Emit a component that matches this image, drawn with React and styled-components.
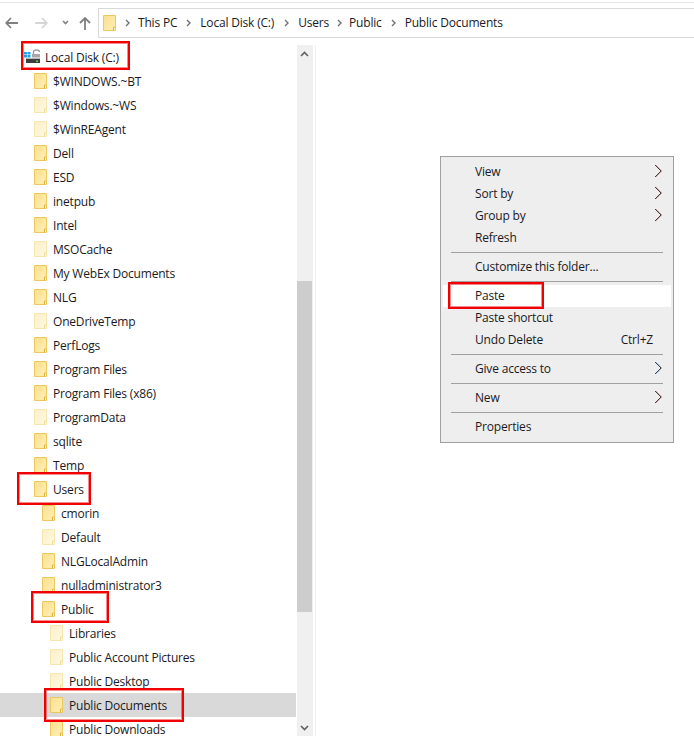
import React from "react";
import styled, { createGlobalStyle } from "styled-components";

const Global = createGlobalStyle`
  html, body { margin: 0; padding: 0; background: #fff; }
  body { font-family: "Open Sans", "Noto Sans", "Liberation Sans", sans-serif; font-size: 12px; letter-spacing: -0.19px; color: #1a1a24; }
`;

const Page = styled.div`
  position: relative;
  width: 694px;
  height: 742px;
  overflow: hidden;
  background: #fff;
`;
const TopLine = styled.div`
  height: 1px;
  margin-top: 2px;
  background: #e3e5e8;
`;
const Toolbar = styled.div`
  display: flex;
  align-items: center;
  height: 30px;
  margin-top: 5px;
`;
const NavButtons = styled.div`
  display: flex;
  align-items: center;
  width: 98px;
  flex: none;
`;
const NavBtn = styled.span`
  display: flex;
  width: ${p => p.$w}px;
  justify-content: center;
  color: ${p => p.$c};
`;
const Address = styled.div`
  flex: 1;
  height: 30px;
  box-sizing: border-box;
  border: 1px solid #d9d9d9;
  border-right: none;
  display: flex;
  align-items: center;
  padding-left: 4px;
`;
const Crumb = styled.span`
  white-space: nowrap;
  line-height: 16px;
`;
const Sep = styled.span`
  display: flex;
  width: ${p => p.$w}px;
  justify-content: center;
`;
const Main = styled.div`
  display: flex;
  height: 691px;
  margin-top: 7px;
`;
const Tree = styled.div`
  width: 296px;
  flex: none;
  overflow: hidden;
`;
const Row = styled.div`
  display: flex;
  align-items: center;
  height: 24px;
  padding-left: ${p => p.$indent}px;
  background: ${p => (p.$selected ? "#d9d9d9" : "transparent")};
  gap: ${p => p.$gap ?? 6}px;
  white-space: nowrap;
`;
const ScrollBar = styled.div`
  width: 16px;
  margin-left: 1px;
  flex: none;
  display: flex;
  flex-direction: column;
  background: #f0f0f0;
`;
const ScrollArrow = styled.div`
  height: 17px;
  flex: none;
  display: flex;
  align-items: center;
  justify-content: center;
  padding-right: 1px;
`;
const ScrollSpace = styled.div`
  height: ${p => p.$h}px;
  margin-right: 1px;
  flex: none;
  background: ${p => p.$c};
`;
const Divider = styled.div`
  width: 1px;
  margin-left: 2px;
  flex: none;
  background: #f0f0f0;
`;

const Menu = styled.div`
  position: absolute;
  left: 440px;
  top: 156px;
  width: 234px;
  height: 287px;
  box-sizing: border-box;
  border: 1px solid #a0a0a0;
  background: #eeeeee;
  padding: 4px 2px 0;
`;
const MenuItem = styled.div`
  display: flex;
  align-items: center;
  justify-content: space-between;
  height: 22px;
  box-sizing: border-box;
  padding: 0 10px 2px 32px;
  background: ${p => (p.$hover ? "#ffffff" : "transparent")};
`;
const Shortcut = styled.span`
  margin-right: 8px;
`;
const MenuSep = styled.div`
  height: 1px;
  margin: 3px 8px;
  background: #a0a0a0;
`;
const Mark = styled.div`
  position: absolute;
  left: ${p => p.$x}px;
  top: ${p => p.$y}px;
  width: ${p => p.$w}px;
  height: ${p => p.$h}px;
  box-sizing: border-box;
  border: 2px solid #f00000;
  box-shadow: inset 0 0 0 1px rgba(240, 0, 0, 0.45);
  pointer-events: none;
`;

const Gradients = () => (
  <svg width="0" height="0" style={{ position: "absolute" }}>
    <defs>
      <linearGradient id="fn" x1="0" y1="0" x2="1" y2="1">
        <stop offset="0" stopColor="#fbdf8c" />
        <stop offset="1" stopColor="#ffefb8" />
      </linearGradient>
      <linearGradient id="ff" x1="0" y1="0" x2="1" y2="1">
        <stop offset="0" stopColor="#fdf0c8" />
        <stop offset="1" stopColor="#fff8e0" />
      </linearGradient>
    </defs>
  </svg>
);

const FolderIcon = ({ faded }) => (
  <svg width="13" height="16" viewBox="0 0 13 16" style={{ flex: "none" }}>
    <path
      d="M.5.5h12v15H.5z"
      fill={faded ? "url(#ff)" : "url(#fn)"}
      stroke={faded ? "#f6e6b0" : "#ecc95f"}
    />
    <path d="M10.5 15.5v-3.5h2" fill={faded ? "#fffaf0" : "#fff5cf"} stroke={faded ? "#f0dc9a" : "#e3b53c"} />
  </svg>
);

const DiskIcon = () => (
  <svg width="17" height="16" viewBox="0 0 17 16" style={{ flex: "none" }}>
    <rect x="0" y="3" width="3" height="2.5" fill="#1aa3ea" />
    <rect x="3.5" y="3" width="3" height="2.5" fill="#1aa3ea" />
    <rect x="0" y="6" width="3" height="2.5" fill="#1aa3ea" />
    <rect x="3.5" y="6" width="3" height="2.5" fill="#1aa3ea" />
    <path d="M9.5 5V3C9.5 .4 15.5 .4 15.5 3" fill="none" stroke="#9c9c9c" strokeWidth="1.4" />
    <rect x="8" y="5" width="8" height="3.5" fill="#a8a8a8" />
    <rect x="2" y="9" width="14" height="1" fill="#b8b8b8" />
    <rect x="2" y="10" width="14" height="4" fill="#3e3e3e" />
    <rect x="12" y="11.5" width="2" height="1.5" fill="#4fd24f" />
  </svg>
);

const Chevron = () => (
  <svg width="7" height="8" viewBox="0 0 7 8">
    <path d="M2 1l3 3-3 3" fill="none" stroke="#707070" strokeWidth="1.4" />
  </svg>
);

const SubArrow = ({ color = "#9a3a3a" }) => (
  <svg width="8" height="14" viewBox="0 0 8 14" style={{ marginRight: "-1px" }}>
    <path d="M1 1l6 6-6 6" fill="none" stroke="#3d3d3d" strokeWidth="1" />
    <path d="M1.8 1l6 6-6 6" fill="none" stroke={color} strokeWidth=".7" opacity=".7" />
  </svg>
);

const rows = [
  ["$WINDOWS.~BT", 34],
  ["$Windows.~WS", 34, true],
  ["$WinREAgent", 34, true],
  ["Dell", 34],
  ["ESD", 34],
  ["inetpub", 34],
  ["Intel", 34],
  ["MSOCache", 34, true],
  ["My WebEx Documents", 34],
  ["NLG", 34],
  ["OneDriveTemp", 34, true],
  ["PerfLogs", 34],
  ["Program Files", 34],
  ["Program Files (x86)", 34],
  ["ProgramData", 34, true],
  ["sqlite", 34],
  ["Temp", 34],
  ["Users", 34],
  ["cmorin", 42],
  ["Default", 42, true],
  ["NLGLocalAdmin", 42],
  ["nulladministrator3", 42],
  ["Public", 42],
  ["Libraries", 50, true],
  ["Public Account Pictures", 50, true],
  ["Public Desktop", 50, true],
  ["Public Documents", 50, false, true],
  ["Public Downloads", 50],
];

const crumbs = [
  ["This PC", 22],
  ["Local Disk (C:)", 23],
  ["Users", 24],
  ["Public", 20],
  ["Public Documents", 23],
];

export default function App() {
  return (
    <Page>
      <Global />
      <Gradients />
      <TopLine />
      <Toolbar>
        <NavButtons>
          <NavBtn $w={22} $c="#808080">
            <svg width="13" height="12" viewBox="0 0 13 12"><path d="M6 1L1.2 6 6 11M1.5 6H13" fill="none" stroke="currentColor" strokeWidth="1.8" /></svg>
          </NavBtn>
          <NavBtn $w={38} $c="#d6d6d6">
            <svg width="13" height="12" viewBox="0 0 13 12"><path d="M7 1l4.8 5L7 11M11.5 6H0" fill="none" stroke="currentColor" strokeWidth="1.8" /></svg>
          </NavBtn>
          <NavBtn $w={11} $c="#808080">
            <svg width="7" height="6" viewBox="0 0 7 6"><path d="M1 1l2.5 2.5L6 1" fill="none" stroke="currentColor" strokeWidth="1.6" /></svg>
          </NavBtn>
          <NavBtn $w={27} $c="#808080">
            <svg width="12" height="13" viewBox="0 0 12 13"><path d="M1 6l5-5 5 5M6 1.5V13" fill="none" stroke="currentColor" strokeWidth="1.8" /></svg>
          </NavBtn>
        </NavButtons>
        <Address>
          <FolderIcon />
          {crumbs.map(([c, w]) => (
            <React.Fragment key={c}>
              <Sep $w={w}><Chevron /></Sep>
              <Crumb>{c}</Crumb>
            </React.Fragment>
          ))}
        </Address>
      </Toolbar>
      <Main>
        <Tree>
          <Row $indent={24} $gap={4}>
            <DiskIcon />
            Local Disk (C:)
          </Row>
          {rows.map(([t, ind, faded, sel]) => (
            <Row key={t} $indent={ind} $selected={sel}>
              <FolderIcon faded={faded} />
              {t}
            </Row>
          ))}
        </Tree>
        <ScrollBar>
          <ScrollArrow>
            <svg width="9" height="6" viewBox="0 0 9 6"><path d="M1 5l3.5-3.5L8 5" fill="none" stroke="#606060" strokeWidth="1.6" /></svg>
          </ScrollArrow>
          <ScrollSpace $h={219} $c="#f0f0f0" />
          <ScrollSpace $h={331} $c="#cdcdcd" />
          <ScrollSpace $h={107} $c="#f0f0f0" />
          <ScrollArrow>
            <svg width="9" height="6" viewBox="0 0 9 6"><path d="M1 1l3.5 3.5L8 1" fill="none" stroke="#606060" strokeWidth="1.6" /></svg>
          </ScrollArrow>
        </ScrollBar>
        <Divider />
      </Main>
      <Menu>
        <MenuItem>View<SubArrow /></MenuItem>
        <MenuItem>Sort by<SubArrow /></MenuItem>
        <MenuItem>Group by<SubArrow /></MenuItem>
        <MenuItem>Refresh</MenuItem>
        <MenuSep />
        <MenuItem>Customize this folder...</MenuItem>
        <MenuSep />
        <MenuItem $hover>Paste</MenuItem>
        <MenuItem>Paste shortcut</MenuItem>
        <MenuItem>Undo Delete<Shortcut>Ctrl+Z</Shortcut></MenuItem>
        <MenuSep />
        <MenuItem>Give access to<SubArrow color="#2f7fd0" /></MenuItem>
        <MenuSep />
        <MenuItem>New<SubArrow /></MenuItem>
        <MenuSep />
        <MenuItem>Properties</MenuItem>
      </Menu>
      <Mark $x={21} $y={41} $w={109} $h={29} />
      <Mark $x={17} $y={472} $w={74} $h={33} />
      <Mark $x={31} $y={591} $w={78} $h={32} />
      <Mark $x={44} $y={688} $w={140} $h={34} />
      <Mark $x={448} $y={282} $w={96} $h={27} />
    </Page>
  );
}
